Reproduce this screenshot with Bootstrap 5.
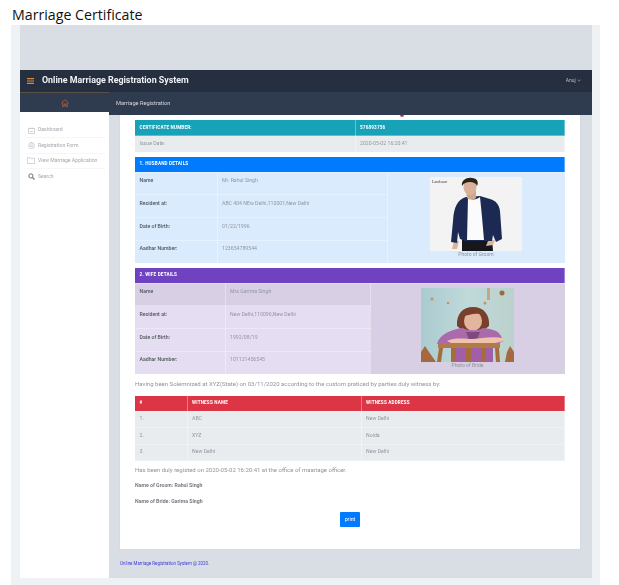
<!DOCTYPE html>
<html lang="en">
<head>
<meta charset="utf-8">
<title>Marriage Certificate</title>
<link href="https://cdn.jsdelivr.net/npm/bootstrap@5.3.0/dist/css/bootstrap.min.css" rel="stylesheet">
<style>
html,body{margin:0;background:#fff;overflow:hidden}
body{width:619px;height:585px;font-family:Roboto,"Liberation Sans",sans-serif}
.doc-title{font-family:"Open Sans","Noto Sans",sans-serif;font-size:14.2px;line-height:25px;height:25px;padding-left:12px;color:#111;padding-top:2px}
.shell{margin-left:11px;width:589px;height:560px;background:#eef2f5;padding:0 8px 7px 9px}
.stage{height:553px;background:#d9dde4;padding-top:45px;display:flex;flex-direction:column;filter:blur(.4px)}
.top-bar{height:22px;background:#262f3f;color:#fff;padding:0 11px 0 7px}
.brand-name{font-size:8.9px;font-weight:700;margin-left:8px;color:#f0f2f5}
.user-name{font-size:5px;color:#b9bec7}
.layout-row{flex:1;min-height:0}
.side-col{width:89px;background:#fff;flex:none}
.side-head{height:20px;background:#2f3b4e;border-top:1px solid #5a5045}
.side-list{padding:11px 4px 0 6px}
.side-item{height:15.3px;font-size:5.1px;color:#a3a7ad;border-bottom:1px solid #f6f6f7;white-space:nowrap;gap:2px}
.side-item:last-child{border-bottom:0}
.side-ico{width:10px;flex:none;display:flex;justify-content:center}
.main-col{flex:1;min-width:0;position:relative}
.sub-bar{height:23px;background:#2f3b4e;color:#d5d9e0;font-size:5.7px;padding-left:7px;position:relative;z-index:2}
.main-pad{padding:0 12px 0 11px}
.paper{height:434px;background:#fff;padding:5px 15px 0;position:relative;box-shadow:0 0 1px #c8ccd4}
.red-tail{position:absolute;left:280px;top:0;width:4px;height:2px;background:#dc3545;border-radius:0 0 2px 2px}
.cert-tbl{table-layout:fixed;width:430px;margin:0;font-size:5.2px}
.cert-tbl th,.cert-tbl td{padding:0 0 0 4.5px;vertical-align:middle;border:0;border-right:1px solid rgba(255,255,255,.35);border-bottom:1px solid rgba(255,255,255,.3);line-height:1.1;box-shadow:none}
.cert-tbl th{color:#fff;font-size:4.6px;font-weight:700;text-transform:uppercase;letter-spacing:.18px;height:15.5px}
.gap-top{margin-top:4px}
.hd-teal th{background:#17a2b8}
.hd-blue th{background:#007bff}
.hd-purple th{background:#6f42c1}
.hd-red th{background:#dc3545}
.cert-tbl td{color:#92979e}
.cert-tbl td.lbl{color:#50555c;font-weight:500;padding-bottom:5px}
.cert-tbl .row-blue td:not(.lbl):not(.pic-cell),.cert-tbl .row-lilac td:not(.lbl):not(.pic-cell){padding-bottom:5px}
.row-grey td{background:#e9ecef;height:16.5px}
.row-blue td{background:#daebfe;height:22.75px}
.row-lilac td{background:#e5def2;height:22.75px}
.row-lilac.deep td,.cert-tbl .row-lilac td.pic-cell{background:#d8cfe5}
.cert-tbl td.pic-cell{text-align:center;padding:4px 0 0;vertical-align:top;border-right:0;font-size:5px;color:#8d9198}
.pic-wrap{display:block;margin:0 auto 1px}
.w-groom{width:92px;height:74px}
.w-bride{width:93px;height:74px}
.c-cert1{width:220px}
.c-h1{width:82px}.c-h2{width:170px}
.c-w1{width:90px}.c-w2{width:145px}
.c-r1{width:52px}.c-r2{width:174px}
.body-line{font-size:6px;color:#8f949b;line-height:8px;margin:0}
.ln-1{padding-top:5px;height:21px}
.ln-2{padding-top:5px;height:16px}
.ln-3,.ln-4{font-weight:700;font-size:5.2px;color:#767b82;height:16px;padding-top:4px}
.print-btn{font-size:5.3px;padding:0;width:20px;height:15px;border-radius:1px;line-height:15px;background:#007bff;border:0;color:#fff}
.print-row{margin-top:3px}
.foot-note{font-size:4.45px;color:#3d3dd6;padding-top:12px;white-space:nowrap}
</style>
</head>
<body>
<div class="doc-title">Marriage Certificate</div>
<div class="shell">
<div class="stage">
  <div class="top-bar d-flex align-items-center justify-content-between">
    <div class="d-flex align-items-center">
      <svg width="7" height="6" viewBox="0 0 7 6"><path d="M0 .6h7M0 3h7M0 5.4h7" stroke="#d98a3c" stroke-width="1.1"/></svg>
      <span class="brand-name">Online Marriage Registration System</span>
    </div>
    <span class="user-name">Anuj
      <svg width="4" height="3" viewBox="0 0 4 3"><path d="M.5.8 2 2.2 3.5.8" fill="none" stroke="#b9bec7" stroke-width=".6"/></svg>
    </span>
  </div>
  <div class="layout-row d-flex">
    <aside class="side-col">
      <div class="side-head d-flex align-items-center justify-content-center">
        <svg width="8" height="8" viewBox="0 0 8 8"><path d="M.5 4 4 .7 7.500 4M1.700 3.300V7.500H3.200V5H4.800V7.500H6.300V3.300" fill="none" stroke="#a5583f" stroke-width="1"/></svg>
      </div>
      <div class="side-list">
        <div class="side-item d-flex align-items-center"><span class="side-ico"><svg width="7" height="7" viewBox="0 0 7 7"><path d="M.5 1.500H6.500V6.500H.5ZM2 .5V2M5 .5V2M2 4.500H5" fill="none" stroke="#b3b6bb" stroke-width=".6"/></svg></span>Dashboard</div>
        <div class="side-item d-flex align-items-center"><span class="side-ico"><svg width="7" height="7" viewBox="0 0 7 7"><circle cx="3.500" cy="3.800" r="2.900" fill="none" stroke="#b3b6bb" stroke-width=".6"/><path d="M1.800 3H5.200M1.800 4.500H5.200M2.500.5H4.500" stroke="#b3b6bb" stroke-width=".6"/></svg></span>Registration Form</div>
        <div class="side-item d-flex align-items-center"><span class="side-ico"><svg width="8" height="7" viewBox="0 0 8 7"><path d="M.3.700H3L3.600 1.400H7.700V6.600H.3Z" fill="none" stroke="#b3b6bb" stroke-width=".6"/></svg></span>View Marriage Application</div>
        <div class="side-item d-flex align-items-center"><span class="side-ico"><svg width="7" height="7" viewBox="0 0 7 7"><circle cx="2.900" cy="2.900" r="2.100" fill="none" stroke="#6e7278" stroke-width="1"/><path d="M4.500 4.500 6.500 6.500" stroke="#6e7278" stroke-width="1.100"/></svg></span>Search</div>
      </div>
    </aside>
    <main class="main-col">
      <div class="sub-bar d-flex align-items-center">Marriage Registration</div>
      <div class="main-pad">
        <div class="paper">
          <span class="red-tail"></span>
          <table class="table cert-tbl">
            <colgroup><col class="c-cert1"><col></colgroup>
            <tr class="hd-teal"><th>Certificate Number:</th><th>576893756</th></tr>
            <tr class="row-grey"><td>Issue Date:</td><td>2020-05-02 16:20:41</td></tr>
          </table>
          <table class="table cert-tbl gap-top">
            <colgroup><col class="c-h1"><col class="c-h2"><col></colgroup>
            <tr class="hd-blue"><th colspan="3">1. Husband Details</th></tr>
            <tr class="row-blue"><td class="lbl">Name</td><td>Mr. Rahul Singh</td>
              <td rowspan="4" class="pic-cell">
                <svg class="pic-wrap w-groom" viewBox="0 0 92 74" role="img" aria-label="Photo of groom">
                  <defs><filter id="gb"><feGaussianBlur stdDeviation=".45"/></filter></defs>
                  <rect width="92" height="74" fill="#f3f3f4"/>
                  <g filter="url(#gb)">
                    <path d="M32 62h30l1 12H32Z" fill="#15151b"/>
                    <path d="M24 64l-2 8h5l2-8ZM58 64l-2 5 7-1 2-5Z" fill="#d9b59b"/>
                    <path d="M36 20 50 19 60 22C66 24 69 27 70 34L72 62 66 65 63 58 62 64H36L30 62 28 55 27 66 21 65 23 44C24 30 27 23 36 20Z" fill="#1e2c52"/>
                    <path d="M38 21C41 23 47 23 50 20L52 40 54 63H37Z" fill="#fbfbfb"/>
                    <path d="M36 13H46L46 21C43 23 39 23 37 21Z" fill="#cfa78f"/>
                    <ellipse cx="40" cy="10" rx="6.500" ry="8" fill="#d8b29a"/>
                    <path d="M32 9C31 3 37 0 42 1 47 1 49 5 47 9 46 6 43 5 40 5 36 5 34 6 32 9Z" fill="#2d2018"/>
                  </g>
                  <text x="2" y="5.500" font-size="4" font-family="Liberation Serif,serif" fill="#444">Landsuur</text>
                </svg>
                Photo of Groom
              </td></tr>
            <tr class="row-blue"><td class="lbl">Resident at:</td><td>ABC 404 NEw Delhi,110001,New Delhi</td></tr>
            <tr class="row-blue"><td class="lbl">Date of Birth:</td><td>01/22/1996</td></tr>
            <tr class="row-blue"><td class="lbl">Aadhar Number:</td><td>123654789544</td></tr>
          </table>
          <table class="table cert-tbl gap-top">
            <colgroup><col class="c-w1"><col class="c-w2"><col></colgroup>
            <tr class="hd-purple"><th colspan="3">2. Wife Details</th></tr>
            <tr class="row-lilac deep"><td class="lbl">Name</td><td>Mrs Garima Singh</td>
              <td rowspan="4" class="pic-cell">
                <svg class="pic-wrap w-bride" viewBox="0 0 93 74" role="img" aria-label="Photo of bride">
                  <defs><filter id="bb"><feGaussianBlur stdDeviation=".6"/></filter>
                  <linearGradient id="wall" x1="0" x2="1"><stop offset="0" stop-color="#a9cbd0"/><stop offset=".5" stop-color="#c0d9da"/><stop offset="1" stop-color="#bbd1cc"/></linearGradient></defs>
                  <rect width="93" height="74" fill="url(#wall)"/>
                  <g filter="url(#bb)">
                    <path d="M0 64 4 58 8 64 15 74H0ZM84 74 86 64 89 58 93 64V74Z" fill="#a5673f"/>
                    <circle cx="11" cy="11" r="1.500" fill="#c58f69"/><circle cx="27" cy="15" r="1.200" fill="#c58f69"/><circle cx="64" cy="15" r="1.500" fill="#c9906a"/><circle cx="81" cy="5" r="2.500" fill="#9c6a42"/><path d="M66 0H69V12H66Z" fill="#c8a486"/>
                    <path d="M36 38C35 26 42 19 52 19 63 19 69 27 68 38L63 42H41Z" fill="#78402a"/>
                    <ellipse cx="52" cy="33" rx="9" ry="10" fill="#e4b59e"/>
                    <path d="M43 28C47 27 56 24 61 27L58 21H46Z" fill="#78402a"/>
                    <path d="M42 40C46 43 58 43 62 40 70 41 77 42 80 48L83 53 76 56 62 55 48 56 34 56 16 56C18 47 30 41 42 40Z" fill="#ab6bab"/>
                    <path d="M45 44H59L56 52H48Z" fill="#7f4a80"/>
                    <path d="M26 53C34 49 44 51 52 51 60 50 72 48 82 50L83 53 70 56H32Z" fill="#eec2ad"/>
                    <path d="M17 55H79V60H17Z" fill="#b07a48"/>
                    <path d="M32 60H72V74H32Z" fill="#a05fa6"/>
                    <path d="M18 60H22L20 74H16ZM74 60H78L79 74H75ZM30 60H35V74H30ZM45 60H50V74H45ZM60 60H65V74H60Z" fill="#a66c3a"/>
                  </g>
                </svg>
                Photo of Bride
              </td></tr>
            <tr class="row-lilac"><td class="lbl">Resident at:</td><td>New Delhi,110096,New Delhi</td></tr>
            <tr class="row-lilac"><td class="lbl">Date of Birth:</td><td>1992/08/19</td></tr>
            <tr class="row-lilac"><td class="lbl">Aadhar Number:</td><td>101121456545</td></tr>
          </table>
          <p class="body-line ln-1">Having been Solemnized at XYZ(State) on 03/11/2020 according to the custom praticed by parties duly witness by:</p>
          <table class="table cert-tbl">
            <colgroup><col class="c-r1"><col class="c-r2"><col></colgroup>
            <tr class="hd-red"><th>#</th><th>Witness Name</th><th>Witness Address</th></tr>
            <tr class="row-grey"><td>1.</td><td>ABC</td><td>New Delhi</td></tr>
            <tr class="row-grey"><td>2.</td><td>XYZ</td><td>Noida</td></tr>
            <tr class="row-grey"><td>3.</td><td>New Delhi</td><td>New Delhi</td></tr>
          </table>
          <p class="body-line ln-2">Has been duly registed on 2020-05-02 16:20:41 at the office of maariage officer.</p>
          <p class="body-line ln-3">Name of Groom: Rahul Singh</p>
          <p class="body-line ln-4">Name of Bride: Garima Singh</p>
          <div class="print-row d-flex justify-content-center"><button type="button" class="btn btn-primary print-btn">print</button></div>
        </div>
        <div class="foot-note">Online Marriage Registration System @ 2020.</div>
      </div>
    </main>
  </div>
</div>
</div>
<script src="https://cdn.jsdelivr.net/npm/bootstrap@5.3.0/dist/js/bootstrap.bundle.min.js"></script>
</body>
</html>
